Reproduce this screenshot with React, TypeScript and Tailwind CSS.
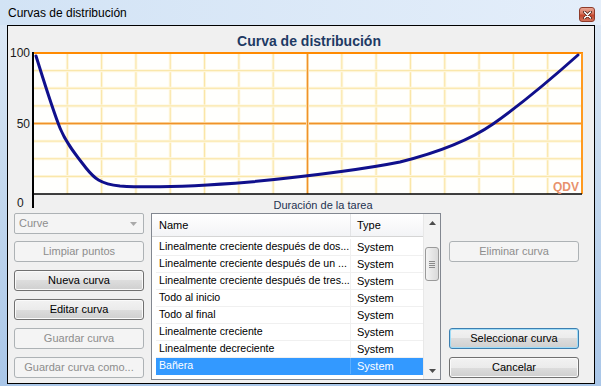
import React from "react";

const curves = [
  { name: "Linealmente creciente después de dos...", type: "System" },
  { name: "Linealmente creciente después de un ...", type: "System" },
  { name: "Linealmente creciente después de tres...", type: "System" },
  { name: "Todo al inicio", type: "System" },
  { name: "Todo al final", type: "System" },
  { name: "Linealmente creciente", type: "System" },
  { name: "Linealmente decreciente", type: "System" },
  { name: "Bañera", type: "System", selected: true },
];

const FONT = "Liberation Sans, Arial, sans-serif";

// plot box in page coords
const PX0 = 33;
const PX1 = 582;
const PY0 = 53;
const PY1 = 194;

function Chart() {
  const vx = Array.from({ length: 15 }, (_, i) => PX0 + ((i + 1) * (PX1 - PX0)) / 16).filter((_, i) => i !== 7);
  const hy = Array.from({ length: 7 }, (_, i) => PY0 + ((i + 1) * (PY1 - PY0)) / 8).filter((_, i) => i !== 3);
  const midX = PX0 + (PX1 - PX0) / 2;
  const midY = PY0 + (PY1 - PY0) / 2;

  return (
    <svg width={586} height={187} viewBox="8 26 586 187" className="block shrink-0" fontFamily={FONT}>
      <text x={309} y={46} textAnchor="middle" fontSize={14} fontWeight="bold" fill="#1e3a64">
        Curva de distribución
      </text>

      <rect x={PX0} y={PY0} width={PX1 - PX0} height={PY1 - PY0} fill="#fffffd" />

      {/* minor grid */}
      {vx.map((x) => (
        <g key={"v" + x}>
          <line x1={x} y1={PY0} x2={x} y2={PY1} stroke="#fef7df" strokeWidth={3} />
          <line x1={x} y1={PY0} x2={x} y2={PY1} stroke="#fae5a4" strokeWidth={1} />
        </g>
      ))}
      {hy.map((y) => (
        <g key={"h" + y}>
          <line x1={PX0} y1={y} x2={PX1} y2={y} stroke="#fef7df" strokeWidth={3} />
          <line x1={PX0} y1={y} x2={PX1} y2={y} stroke="#fae5a4" strokeWidth={1} />
        </g>
      ))}

      {/* 50% lines */}
      <line x1={PX0} y1={midY} x2={PX1} y2={midY} stroke="#fce2b4" strokeWidth={3} />
      <line x1={PX0} y1={midY} x2={PX1} y2={midY} stroke="#f0922a" strokeWidth={1.3} />
      <line x1={midX} y1={PY0} x2={midX} y2={PY1} stroke="#fce2b4" strokeWidth={3} />
      <line x1={midX} y1={PY0} x2={midX} y2={PY1} stroke="#f0922a" strokeWidth={1.3} />

      {/* frame */}
      <line x1={PX0} y1={PY0} x2={PX1 + 1} y2={PY0} stroke="#ff8a00" strokeWidth={2} />
      <line x1={PX1} y1={PY0} x2={PX1} y2={PY1} stroke="#ff9a20" strokeWidth={2} />
      <line x1={PX0} y1={PY1} x2={PX1} y2={PY1} stroke="#000" strokeWidth={1.6} />
      <line x1={PX0} y1={52} x2={PX0} y2={208} stroke="#000" strokeWidth={2} />

      {/* axis labels */}
      <text x={30} y={57} textAnchor="end" fontSize={12} fill="#1a1a1a">100</text>
      <text x={30} y={128} textAnchor="end" fontSize={12} fill="#1a1a1a">50</text>
      <text x={17} y={207} fontSize={12} fill="#1a1a1a">0</text>

      <text x={579} y={191} textAnchor="end" fontSize={12} fontWeight="bold" fill="#e8916c">QDV</text>

      {/* distribution curve */}
      <path
        d="M36,56 C42,75 52,108 60,128 C66,143 76,155 86,168 C94,178 100,184 120,186 C150,188 200,186 250,182 C300,177 360,170 400,162 C440,152 470,140 493,124 C520,105 550,80 578,55"
        fill="none"
        stroke="#10108c"
        strokeWidth={3}
        strokeLinecap="round"
        strokeLinejoin="round"
      />

      <text x={323} y={209} textAnchor="middle" fontSize={11} fill="#1e3250">
        Duración de la tarea
      </text>
    </svg>
  );
}

type BtnKind = "normal" | "disabled" | "default";

function Btn({ label, kind = "normal", className = "" }: { label: string; kind?: BtnKind; className?: string }) {
  const base = "h-[21px] w-[130px] rounded-[3px] border flex items-center justify-center text-[11px] leading-none";
  const styles: Record<BtnKind, string> = {
    normal:
      "border-[#707070] text-black bg-[linear-gradient(to_bottom,#f2f2f2_0%,#ebebeb_50%,#dddddd_50%,#cfcfcf_100%)] shadow-[inset_0_0_0_1px_#fafafa]",
    disabled: "border-[#adb2b5] text-[#8d8d8d] bg-[#f4f4f4]",
    default:
      "border-[#3c7fb1] text-black bg-[linear-gradient(to_bottom,#f2f2f2_0%,#ebebeb_50%,#dddddd_50%,#cfcfcf_100%)] shadow-[inset_0_0_0_1px_#9fdcf7]",
  };
  return <div className={`${base} ${styles[kind]} ${className}`}>{label}</div>;
}

function ScrollArrow({ up }: { up?: boolean }) {
  return (
    <div className="h-[17px] flex items-center justify-center">
      <svg width="7" height="4" viewBox="0 0 7 4">
        <path d={up ? "M0,4 L3.5,0 L7,4 Z" : "M0,0 L3.5,4 L7,0 Z"} fill="#4d4d4d" />
      </svg>
    </div>
  );
}

function CurveList() {
  return (
    <div className="ml-[7px] w-[290px] h-[167px] border border-[#828790] bg-white flex">
      <div className="flex-1 flex flex-col min-w-0">
        {/* header */}
        <div className="h-[23px] flex bg-[linear-gradient(to_bottom,#ffffff,#f3f4f6)] border-b border-[#d5d5d5] text-[11px] text-black">
          <div className="w-[199px] pl-[7px] flex items-center border-r border-[#e3e4e6]">Name</div>
          <div className="flex-1 pl-[6px] flex items-center">Type</div>
        </div>
        {/* rows */}
        <div className="pl-[4px] pt-[2px] flex flex-col text-[10.6px]">
          {curves.map((c) => (
            <div
              key={c.name}
              className={`h-[17px] flex border-b ${
                c.selected ? "bg-[#3399ff] text-white border-[#3399ff]" : "text-black border-[#f0f0f0]"
              }`}
            >
              <div className={`w-[195px] pl-[3px] flex items-center whitespace-nowrap overflow-hidden border-r ${c.selected ? "border-[#5aaeff]" : "border-[#f0f0f0]"}`}>
                {c.name}
              </div>
              <div className="flex-1 pl-[6px] flex items-center text-[11px]">{c.type}</div>
            </div>
          ))}
        </div>
      </div>
      {/* vertical scrollbar */}
      <div className="w-[17px] bg-[#f3f3f3] border-l border-[#e8e8e8] flex flex-col">
        <ScrollArrow up />
        <div className="flex-1 px-[1px]">
          <div className="mt-[16px] h-[34px] rounded-[3px] border border-[#9a9a9a] bg-[linear-gradient(to_right,#f4f4f4,#e6e6e6_50%,#dadada)] flex flex-col items-center justify-center gap-[1px]">
            <div className="w-[6px] h-[1px] bg-[#8a8a8a]" />
            <div className="w-[6px] h-[1px] bg-[#8a8a8a]" />
            <div className="w-[6px] h-[1px] bg-[#8a8a8a]" />
            <div className="w-[6px] h-[1px] bg-[#8a8a8a]" />
          </div>
        </div>
        <ScrollArrow />
      </div>
    </div>
  );
}

function CloseButton() {
  return (
    <div className="mt-[7px] w-[16px] h-[15px] rounded-[3px] border border-[#8e3b2a] bg-[linear-gradient(to_bottom,#e9a593_0%,#d8745d_45%,#c2452c_55%,#d2735c_100%)] flex items-center justify-center">
      <svg width="9" height="8" viewBox="0 0 9 8">
        <path d="M1.5,1 L7.5,7 M7.5,1 L1.5,7" stroke="#4a1a10" strokeWidth={3} strokeLinecap="round" />
        <path d="M1.5,1 L7.5,7 M7.5,1 L1.5,7" stroke="#ffffff" strokeWidth={1.6} strokeLinecap="round" />
      </svg>
    </div>
  );
}

export default function App() {
  return (
    <div
      className="w-[601px] h-[386px] flex flex-col bg-[linear-gradient(to_bottom,#cfe0f3_0%,#dbe8f6_8%,#c8dbef_40%,#a9c6e8_100%)] font-['Liberation_Sans',Arial,sans-serif]"
    >
      {/* title bar */}
      <div className="h-[25px] shrink-0 flex items-start justify-between pl-[8px] pr-[6px] bg-[linear-gradient(to_right,#d2e3f5,#e4eefa)]">
        <span className="mt-[5px] leading-[16px] text-[12px] text-black">Curvas de distribución</span>
        <CloseButton />
      </div>

      {/* client area */}
      <div className="ml-[7px] mr-[6px] mb-[2px] flex-1 border border-black bg-[#f0f0f0] flex flex-col">
        <Chart />

        <div className="flex items-start pl-[6px]">
          {/* left column */}
          <div className="w-[130px] flex flex-col">
            <div className="h-[21px] w-[130px] rounded-[2px] border border-[#adb2b5] bg-[#f4f4f4] flex items-center justify-between pl-[4px] pr-[6px] text-[11px] text-[#8d8d8d]">
              <span>Curve</span>
              <svg width="7" height="4" viewBox="0 0 7 4">
                <path d="M0,0 L3.5,4 L7,0 Z" fill="#a9a9a9" />
              </svg>
            </div>
            <Btn label="Limpiar puntos" kind="disabled" className="mt-[7px]" />
            <Btn label="Nueva curva" className="mt-[8px]" />
            <Btn label="Editar curva" className="mt-[8px]" />
            <Btn label="Guardar curva" kind="disabled" className="mt-[8px]" />
            <Btn label="Guardar curva como..." kind="disabled" className="mt-[8px]" />
          </div>

          <CurveList />

          {/* right column */}
          <div className="ml-[8px] w-[130px] flex flex-col">
            <Btn label="Eliminar curva" kind="disabled" className="mt-[28px]" />
            <Btn label="Seleccionar curva" kind="default" className="mt-[66px]" />
            <Btn label="Cancelar" className="mt-[8px]" />
          </div>
        </div>
      </div>
    </div>
  );
}
